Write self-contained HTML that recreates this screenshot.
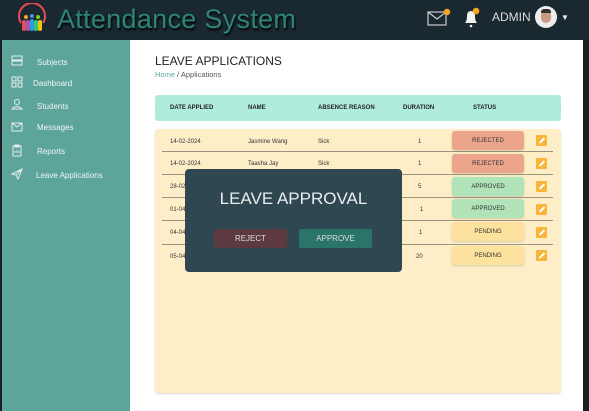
<!DOCTYPE html>
<html><head><meta charset="utf-8"><style>
*{margin:0;padding:0;box-sizing:border-box}
body{width:589px;height:411px;overflow:hidden;background:#1d1f20;font-family:"Liberation Sans",sans-serif;position:relative}
.hdr{position:absolute;left:0;top:0;width:589px;height:40px;background:#1a2830}
.title{position:absolute;left:57px;top:4px;font-size:27px;color:#2d8577;letter-spacing:0.3px;text-shadow:1px 2px 2px #000;white-space:nowrap}
.side{position:absolute;left:2px;top:40px;width:128px;height:371px;background:#5da59a}
.main{position:absolute;left:130px;top:40px;width:453px;height:371px;background:#fff}
.si{position:absolute;font-size:8px;color:#f0f5f4}
.abs{position:absolute}
.th{position:absolute;top:105px;font-size:6px;font-weight:bold;color:#222}
.td{position:absolute;font-size:6px;color:#333}
.pill{position:absolute;left:452px;width:72px;height:19px;border-radius:3px;font-size:6px;color:#333;display:flex;align-items:center;justify-content:center;box-shadow:0 1px 2px rgba(0,0,0,.15)}
.sep{position:absolute;left:162px;width:391px;height:1px;background:#9a9480}
.ed{position:absolute;left:536px;width:11px;height:11px;background:#f8b53a;border-radius:1px}
.ed:after{content:"";position:absolute;left:5px;top:2px;width:2px;height:7px;background:#fff;transform:rotate(45deg)}
</style></head><body>
<div class="hdr">
 <svg class="abs" style="left:16px;top:3px" width="32" height="32" viewBox="0 0 32 32">
  <path d="M5 20 A13 13 0 1 1 27 20" fill="none" stroke="#e84a5f" stroke-width="2"/>
  <circle cx="10" cy="14" r="2" fill="#f5a623"/><circle cx="16" cy="13" r="2" fill="#4a90e2"/><circle cx="22" cy="14" r="2" fill="#7ed321"/>
  <rect x="6" y="17" width="4" height="11" rx="2" fill="#e84a5f"/><rect x="10" y="17" width="4" height="11" rx="2" fill="#9b59b6"/>
  <rect x="14" y="16" width="4" height="12" rx="2" fill="#3498db"/><rect x="18" y="17" width="4" height="11" rx="2" fill="#2ecc71"/><rect x="22" y="17" width="4" height="11" rx="2" fill="#f1c40f"/>
 </svg>
 <div class="title">Attendance System</div>
 <svg class="abs" style="left:427px;top:8px" width="24" height="20" viewBox="0 0 24 20"><rect x="1" y="4" width="18" height="13" fill="none" stroke="#ccc" stroke-width="1.2"/><path d="M1 4 L10 11 L19 4" fill="none" stroke="#ccc" stroke-width="1.2"/><circle cx="20" cy="4" r="3.2" fill="#f5a623"/></svg>
 <svg class="abs" style="left:462px;top:7px" width="20" height="22" viewBox="0 0 20 22"><path d="M3 16 Q5 14 5 9 Q5 4 9 4 Q13 4 13 9 Q13 14 15 16 Z" fill="#f2f2f2"/><circle cx="9" cy="19" r="1.3" fill="#f2f2f2"/><circle cx="14" cy="4" r="3.3" fill="#f5a623"/></svg>
 <div class="abs" style="left:492px;top:10px;font-size:12px;color:#ddd">ADMIN</div>
 <div class="abs" style="left:535px;top:6px;width:22px;height:22px;border-radius:50%;background:#eee;overflow:hidden"><div style="position:absolute;left:6px;top:4px;width:10px;height:13px;border-radius:5px;background:#c99b83"></div><div style="position:absolute;left:6px;top:3px;width:10px;height:4px;background:#333;border-radius:3px 3px 0 0"></div></div>
 <div class="abs" style="left:561px;top:13px;font-size:8px;color:#eee">▼</div>
</div>
<div class="side"></div>
<svg class="abs" style="left:11px;top:55px" width="12" height="140" viewBox="0 0 12 140" fill="none" stroke="#e8f0ee" stroke-width="1">
 <rect x="1" y="1" width="10" height="4"/><rect x="1" y="6" width="10" height="4"/>
 <rect x="1" y="22" width="4" height="4"/><rect x="7" y="22" width="4" height="4"/><rect x="1" y="28" width="4" height="4"/><rect x="7" y="28" width="4" height="4"/>
 <circle cx="6" cy="47" r="2.5"/><path d="M1 54 Q6 49 11 54 Z"/>
 <rect x="1" y="68" width="10" height="8"/><path d="M1 68 L6 72 L11 68"/>
 <rect x="2" y="91" width="8" height="10"/><rect x="4" y="90" width="4" height="2"/><path d="M4 98 v-2 M6 98 v-3 M8 98 v-2"/>
 <path d="M1 119 L11 114 L7 124 L5 120 Z M5 120 L11 114"/>
</svg>
<div class="si" style="left:37px;top:58px">Subjects</div>
<div class="si" style="left:33px;top:79px">Dashboard</div>
<div class="si" style="left:37px;top:102px">Students</div>
<div class="si" style="left:37px;top:123px">Messages</div>
<div class="si" style="left:37px;top:147px">Reports</div>
<div class="si" style="left:36px;top:171px">Leave Applications</div>
<div class="main"></div>
<div class="abs" style="left:155px;top:54px;font-size:12px;color:#222">LEAVE APPLICATIONS</div>
<div class="abs" style="left:155px;top:70px;font-size:7.5px;color:#555"><span style="color:#5aa89b">Home</span> / Applications</div>
<div class="abs" style="left:155px;top:95px;width:406px;height:26px;background:#b0ecdd;border-radius:3px"></div>
<div class="th" style="left:170px">DATE APPLIED</div><div class="th" style="left:248px">NAME</div><div class="th" style="left:318px">ABSENCE REASON</div><div class="th" style="left:403px">DURATION</div><div class="th" style="left:473px">STATUS</div>
<div class="abs" style="left:155px;top:129px;width:406px;height:264px;background:#fdeec8;border-radius:3px;box-shadow:0 1px 2px rgba(0,0,0,.15)"></div>
<div class="sep" style="top:151px"></div><div class="sep" style="top:174px"></div><div class="sep" style="top:197px"></div><div class="sep" style="top:220px"></div><div class="sep" style="top:244px"></div>
<div class="td" style="left:170px;top:139px">14-02-2024</div><div class="td" style="left:248px;top:139px">Jasmine Wang</div><div class="td" style="left:318px;top:139px">Sick</div><div class="td" style="left:418px;top:139px">1</div>
<div class="td" style="left:170px;top:161px">14-02-2024</div><div class="td" style="left:248px;top:161px">Taasha Jay</div><div class="td" style="left:318px;top:161px">Sick</div><div class="td" style="left:418px;top:161px">1</div>
<div class="td" style="left:170px;top:184px">28-02</div><div class="td" style="left:418px;top:184px">5</div>
<div class="td" style="left:170px;top:207px">01-04</div><div class="td" style="left:420px;top:207px">1</div>
<div class="td" style="left:170px;top:230px">04-04</div><div class="td" style="left:419px;top:230px">1</div>
<div class="td" style="left:170px;top:254px">05-04</div><div class="td" style="left:416px;top:254px">20</div>
<div class="pill" style="top:131px;background:#eba58b">REJECTED</div>
<div class="pill" style="top:154px;background:#eba58b">REJECTED</div>
<div class="pill" style="top:177px;background:#b0e3b8">APPROVED</div>
<div class="pill" style="top:199px;background:#b0e3b8">APPROVED</div>
<div class="pill" style="top:222px;background:#fde29e">PENDING</div>
<div class="pill" style="top:246px;background:#fde29e">PENDING</div>
<div class="ed" style="top:135px"></div><div class="ed" style="top:158px"></div><div class="ed" style="top:181px"></div><div class="ed" style="top:204px"></div><div class="ed" style="top:227px"></div><div class="ed" style="top:250px"></div>
<div class="abs" style="left:185px;top:169px;width:217px;height:103px;background:#2f4751;border-radius:4px"></div>
<div class="abs" style="left:185px;top:189px;width:217px;text-align:center;font-size:17px;color:#e8eef0">LEAVE APPROVAL</div>
<div class="abs" style="left:214px;top:229px;width:73px;height:19px;background:#5d3a40;border-radius:2px;color:#ddd;font-size:8px;text-align:center;line-height:19px">REJECT</div>
<div class="abs" style="left:299px;top:229px;width:73px;height:19px;background:#2a7468;border-radius:2px;color:#ddd;font-size:8px;text-align:center;line-height:19px">APPROVE</div>
</body></html>
